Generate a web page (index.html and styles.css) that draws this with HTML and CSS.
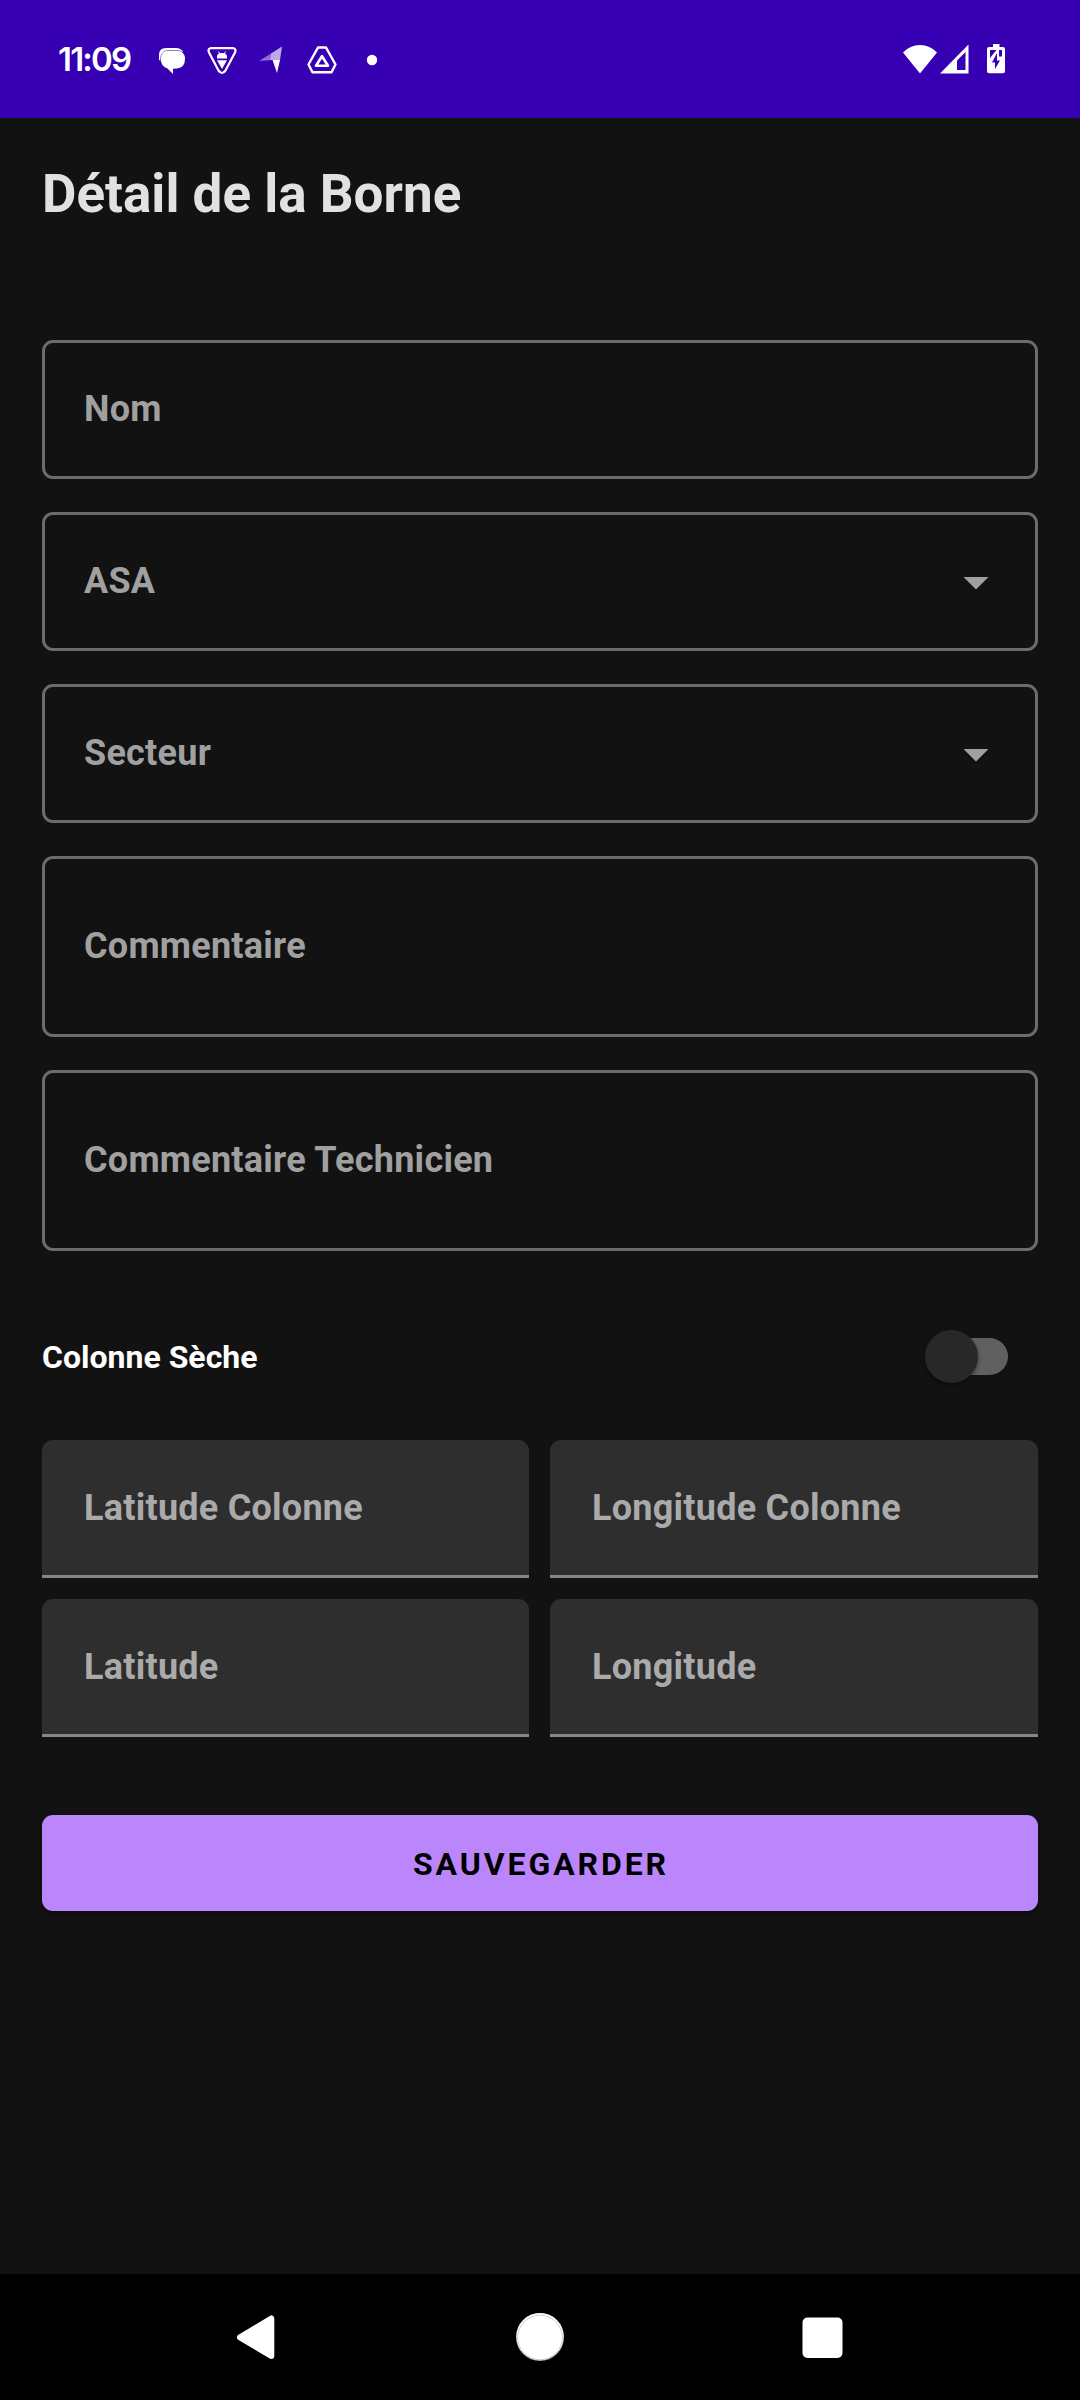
FILE: index.html
```html
<!DOCTYPE html>
<html lang="fr">
<head>
<meta charset="utf-8">
<title>Détail de la Borne</title>
<link rel="stylesheet" href="styles.css">
</head>
<body>
<div class="screen">
  <header class="status-bar">
    <span class="clock">11:09</span>
    <div class="notifications">
      <svg class="notif" viewBox="0 0 50 50" fill="#fff">
        <path d="M12 25V20Q12 13 19 13H29Q34 13 36 17L30 26L14 26Z"/>
        <path d="M13.800 24Q13.800 15.700 22 15.700H30Q38 16 38 24Q38 32.500 30 33.500L26 33.800V39L20.500 33.500Q13.800 31.500 13.800 24Z" stroke="#3700b3" stroke-width=".9" paint-order="stroke"/>
      </svg>
      <svg class="notif" viewBox="0 0 50 50" fill="none" stroke="#fff">
        <path d="M13.500 13.200H36.500Q39.500 14 38 17.500L28.500 35.500Q25 40.500 21.500 35.500L12 17.500Q10.500 14 13.500 13.200Z" stroke-width="2.200"/>
        <path d="M20 23.400V21.500Q20 18 25 18T30 21.500V23.400ZM20 25.200H30L25 34Z" fill="#fff" stroke="none"/>
        <path d="M21.500 16.500L22.800 19M28.500 16.500L27.200 19" stroke-width="1"/>
      </svg>
      <svg class="notif" viewBox="0 0 50 50">
        <path d="M12 26L24 18.500L23 25.200Z" fill="#8f6cd6"/>
        <path d="M24 18.500L35 11.500L33 25H23Z" fill="#bda8e8"/>
        <path d="M25.500 25H33L30 38Z" fill="#fff"/>
      </svg>
      <svg class="notif" viewBox="0 0 50 50" fill="none" stroke="#fff" stroke-linejoin="round">
        <path d="M21 12.500H29L38.500 29.500L34.500 37.200H15.500L11.500 29.500Z" stroke-width="2.400"/>
        <path d="M25 21.200L31 30.700H19Z" stroke-width="2.600"/>
      </svg>
      <svg class="notif" viewBox="0 0 50 50"><circle cx="25" cy="25" r="5.200" fill="#fff"/></svg>
    </div>
    <div class="system">
      <svg class="wifi" viewBox="0 0 34 30" fill="#fff"><path d="M0 8.500Q7 1 17 1T34 8.500L17 29.500Z"/></svg>
      <svg class="signal" viewBox="0 0 29 30"><path d="M28.500 .500V29.500H0Z" fill="#fff"/><path d="M17 16.500L25.500 8V26H17Z" fill="#3700b3"/></svg>
      <svg class="battery" viewBox="0 0 18 30"><path d="M6 0H12.500V3H16Q18 3 18 5V27Q18 29.200 16 29.200H2Q0 29.200 0 27V5Q0 3 2 3H6Z" fill="#fff"/><path d="M3 6H9.500L3 14ZM12 6H15V12.500H12ZM10 9V16.500H13L8 25V18.500H5Z" fill="#3700b3"/></svg>
    </div>
  </header>
  <main class="content">
    <h1 class="title">Détail de la Borne</h1>
    <div class="fields">
      <div class="outlined">Nom</div>
      <div class="outlined">ASA<i class="caret"></i></div>
      <div class="outlined">Secteur<i class="caret"></i></div>
      <div class="outlined tall">Commentaire</div>
      <div class="outlined tall">Commentaire Technicien</div>
    </div>
    <div class="switch-row">
      <span class="switch-label">Colonne Sèche</span>
      <div class="switch"><i class="thumb"></i></div>
    </div>
    <div class="coords">
      <div class="filled">Latitude Colonne</div>
      <div class="filled">Longitude Colonne</div>
      <div class="filled">Latitude</div>
      <div class="filled">Longitude</div>
    </div>
    <button class="save">SAUVEGARDER</button>
  </main>
  <nav class="nav-bar">
    <svg class="nav-icon" viewBox="0 0 60 60"><path d="M12 30.300L43.300 11.500V49Z" fill="#fff" stroke="#fff" stroke-width="6" stroke-linejoin="round"/></svg>
    <svg class="nav-icon" viewBox="0 0 60 60"><circle cx="30" cy="30" r="24" fill="#999"/><circle cx="30" cy="29.600" r="23.600" fill="#fff"/><circle cx="30" cy="30.500" r="22.300" fill="none" stroke="#aaa" stroke-width=".6"/></svg>
    <svg class="nav-icon" viewBox="0 0 60 60"><rect x="10.500" y="10.500" width="40" height="40.500" rx="5" fill="#fff"/></svg>
  </nav>
</div>
</body>
</html>
```
FILE: styles.css
```css
* { box-sizing: border-box; }
body { margin: 0; background: #121212; font-family: Roboto, sans-serif; font-weight: 700; }
.screen { display: flex; flex-direction: column; width: 1080px; height: 2400px; }
svg { display: block; }

.status-bar { display: flex; align-items: center; height: 118px; padding: 0 75px 0 58px; background: #3700b3; color: #fff; }
.clock { width: 89px; font: 600 33px/40px Inter, sans-serif; letter-spacing: -1.800px; white-space: nowrap; }
.notifications { display: flex; }
.notif { width: 50px; height: 50px; margin-top: 2px; }
.system { display: flex; margin-left: auto; }
.wifi { width: 34px; height: 30px; margin-right: 3px; }
.signal { width: 29px; height: 30px; margin-right: 18px; }
.battery { width: 18px; height: 30px; }

.content { flex: 1; padding: 0 42px; }
.title { margin: 0; padding-top: 45px; height: 222px; font-size: 53px; line-height: 62px; color: #e1e1e1; }

.fields { display: flex; flex-direction: column; gap: 33px; }
.outlined { display: flex; align-items: center; justify-content: space-between; height: 139px; padding: 0 46px 1px 39px; border: 3px solid #6c6c6c; border-radius: 11px; font-size: 36px; letter-spacing: .25px; color: #a0a0a0; }
.tall { height: 181px; }
.caret { width: 26px; height: 13px; margin-top: 4px; background: #a0a0a0; clip-path: polygon(0 0, 100% 0, 50% 100%); }

.switch-row { display: flex; align-items: center; justify-content: space-between; height: 126px; margin: 42px 0 21px; padding-right: 30px; font-size: 32px; color: #fff; }
.switch-label { padding-top: 2px; }
.switch { display: flex; align-items: center; width: 73px; height: 37px; border-radius: 19px; background: #606060; }
.thumb { flex: none; width: 53px; height: 53px; margin-left: -10px; border-radius: 50%; background: #282828; box-shadow: 0 2px 4px rgba(0, 0, 0, .4); }

.coords { display: grid; grid-template-columns: 487px 488px; gap: 21px; }
.filled { display: flex; align-items: center; height: 138px; padding: 0 42px; border-bottom: 3px solid #868686; border-radius: 11px 11px 0 0; background: linear-gradient(#2e2e2e, #2e2e2e); font-size: 36px; letter-spacing: .25px; color: #aaa; }

.save { display: flex; align-items: center; justify-content: center; width: 100%; height: 96px; margin-top: 78px; padding: 2px 0 0 2px; border: 0; border-radius: 11px; background: #bb86fc; box-shadow: 0 4px 6px rgba(0, 0, 0, .35); font: 700 32px/40px Roboto, sans-serif; letter-spacing: 2.900px; color: #000; }

.nav-bar { display: flex; justify-content: center; gap: 222px; height: 126px; padding-top: 33px; background: #000; }
.nav-icon { width: 60px; height: 60px; }
```
